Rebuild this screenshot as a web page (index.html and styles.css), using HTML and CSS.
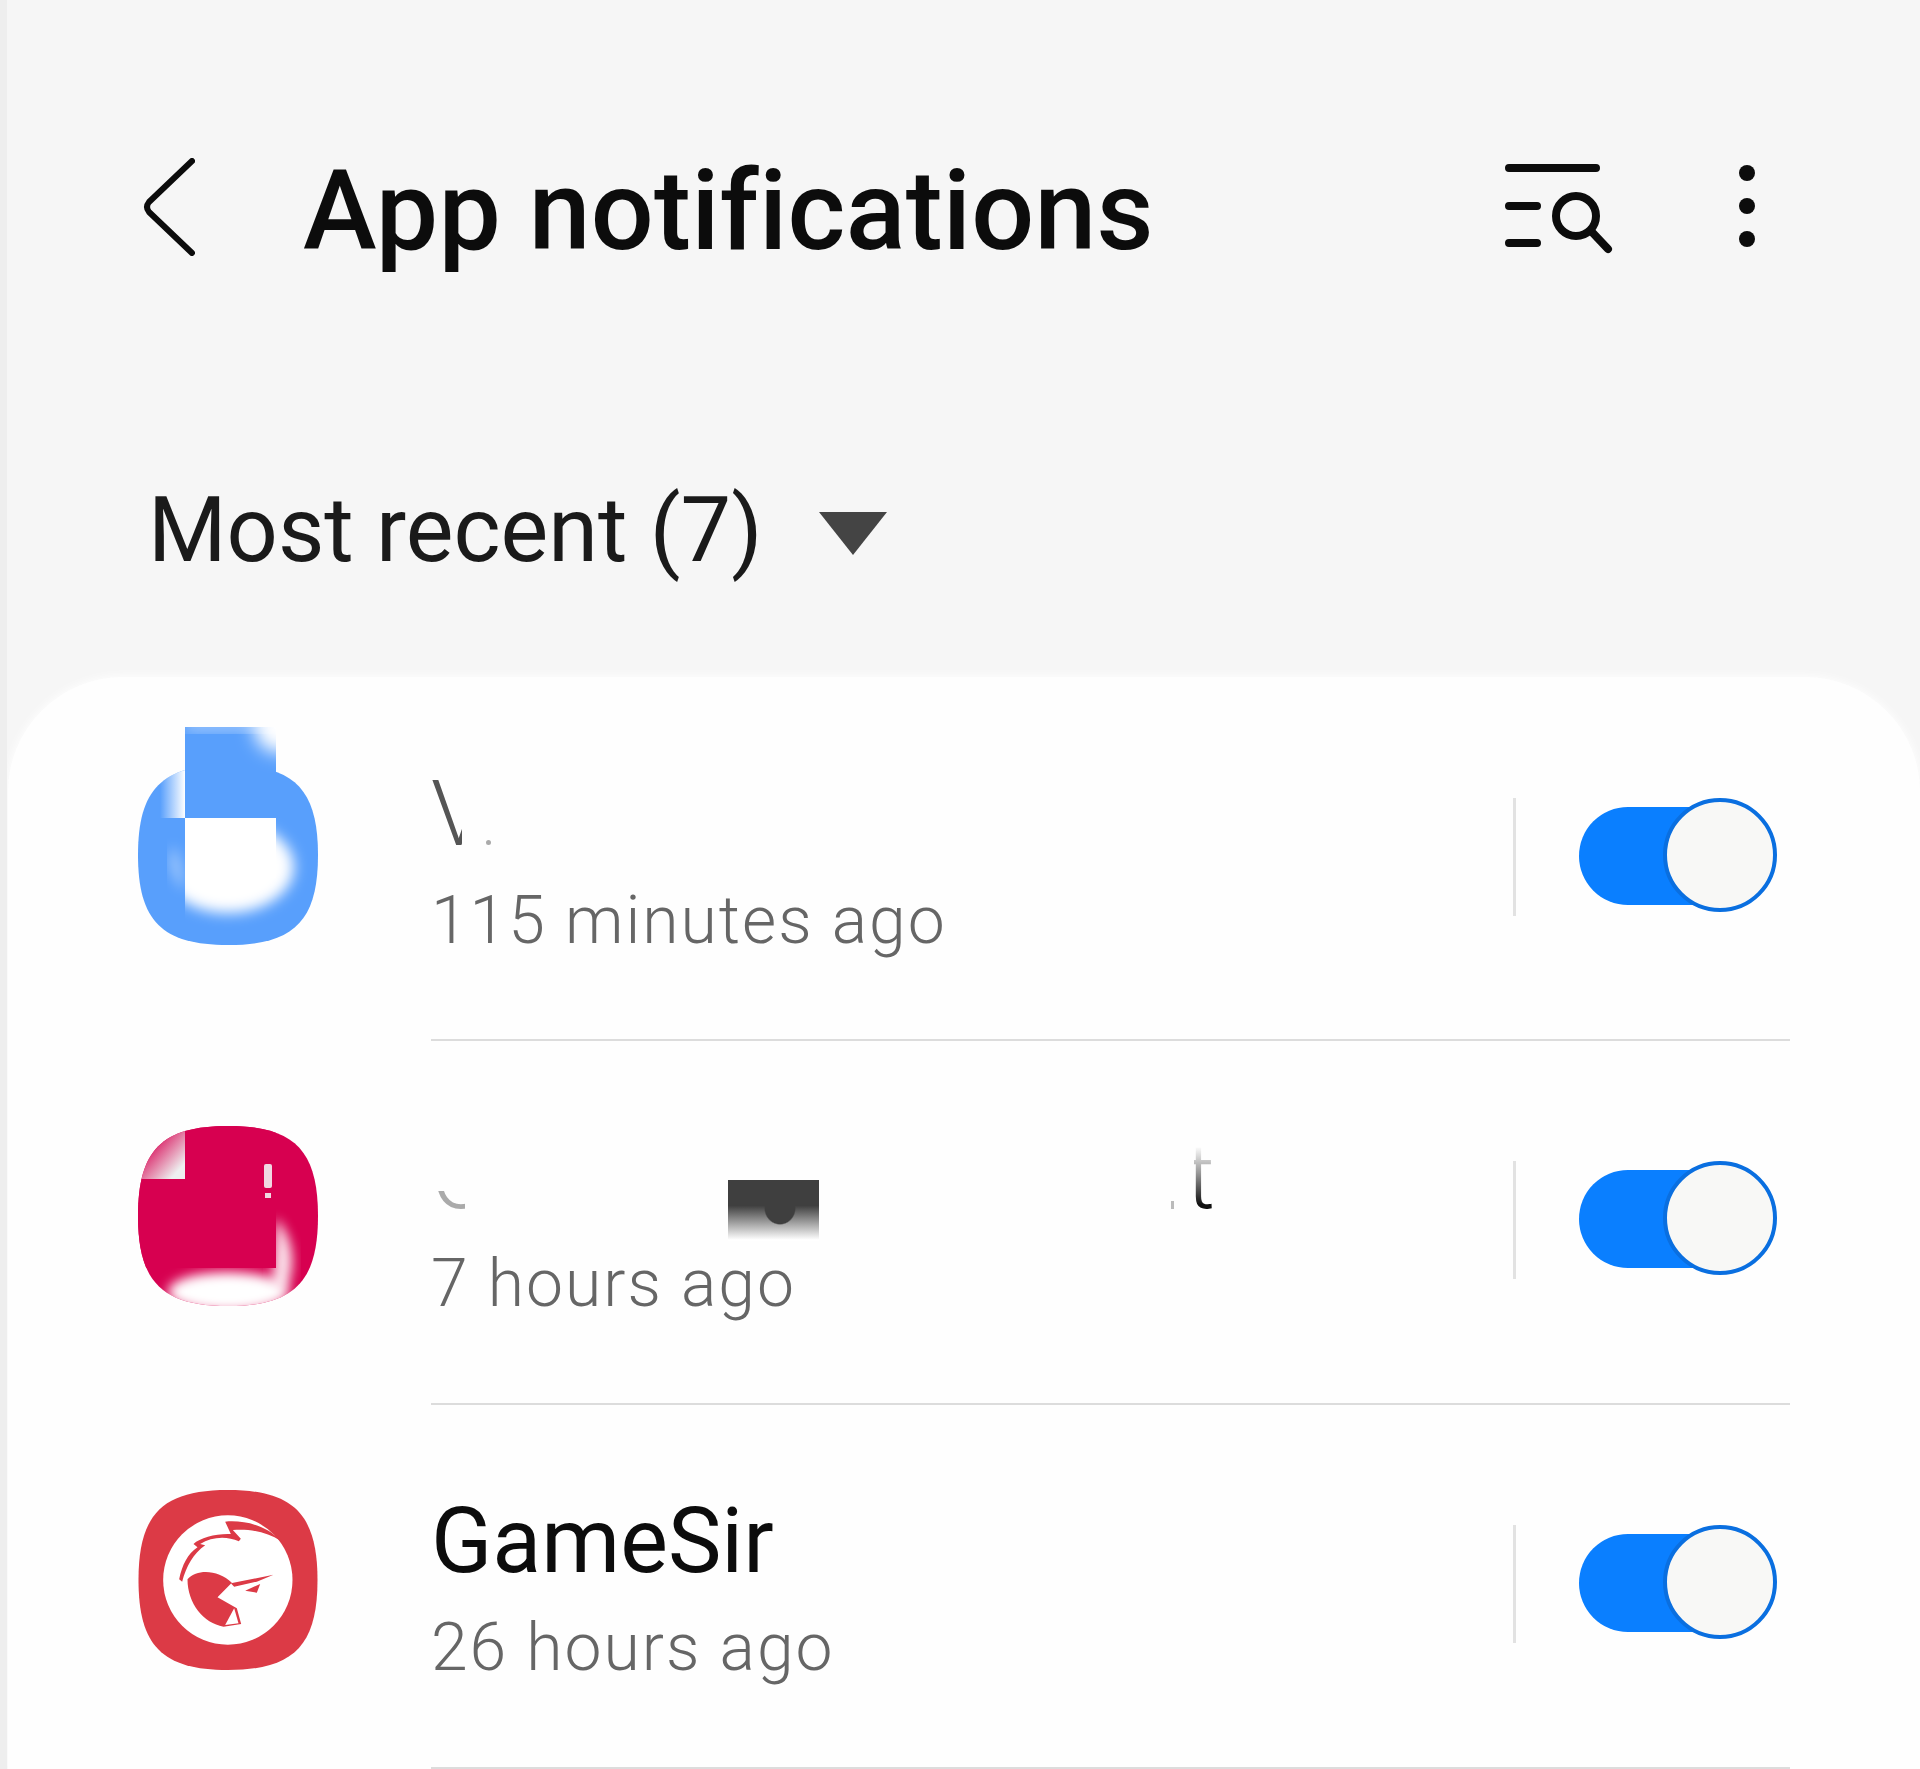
FILE: index.html
```html
<!DOCTYPE html>
<html lang="en">
<head>
  <meta charset="UTF-8" />
  <meta name="viewport" content="width=device-width, initial-scale=1" />
  <title>App notifications</title>
  <link rel="stylesheet" href="styles.css">
</head>
<body>
  <header class="app-bar">
    <svg class="back-icon" viewBox="0 0 52 98" aria-hidden="true">
      <path d="M49 3 6 44q-4 5 0 10l43 41" />
    </svg>
    <h1>App notifications</h1>
    <svg class="search-icon" viewBox="0 0 116 92" aria-hidden="true">
      <path d="M8 4h87M8 42h28M8 79h28M90 67l17 18" />
      <circle cx="75" cy="52" r="20" />
    </svg>
    <div class="more-icon"><span></span><span></span><span></span></div>
  </header>

  <div class="sort-row">
    <span>Most recent (7)</span>
    <div class="sort-arrow"></div>
  </div>

  <main class="card">
    <div class="row">
      <div class="icon icon-blue">
        <svg viewBox="0 0 180 218" aria-hidden="true">
          <defs>
            <clipPath id="blueBody">
              <path d="M90 38c66 0 90 24 90 90s-24 90-90 90-90-24-90-90 24-90 90-90z" />
            </clipPath>
            <clipPath id="blueTop">
              <rect x="47" y="0" width="91" height="91" />
            </clipPath>
            <clipPath id="blueInner">
              <rect x="47" y="91" width="133" height="127" />
            </clipPath>
            <linearGradient id="blueFadeLeft" x1="0" y1="0" x2="1" y2="0">
              <stop offset="0" stop-color="#fff" stop-opacity="0" />
              <stop offset="1" stop-color="#fff" />
            </linearGradient>
            <filter id="blueBlur" x="-30%" y="-30%" width="160%" height="160%">
              <feGaussianBlur stdDeviation="7" />
            </filter>
            <filter id="blueBlurBig" x="-60%" y="-60%" width="220%" height="220%">
              <feGaussianBlur stdDeviation="9" />
            </filter>
          </defs>
          <g clip-path="url(#blueBody)">
            <rect y="38" width="180" height="180" fill="#589ffc" />
            <rect x="22" y="38" width="25" height="53" fill="url(#blueFadeLeft)" />
            <g clip-path="url(#blueInner)">
              <ellipse cx="90" cy="140" rx="66" ry="46" fill="#fff" filter="url(#blueBlur)" />
            </g>
            <path d="M36 118q-8 22 11 46z" fill="#fff" opacity="0.75" filter="url(#blueBlur)" />
            <rect x="47" y="91" width="91" height="60" fill="#fff" />
          </g>
          <rect x="47" y="0" width="91" height="91" fill="#589ffc" />
          <g clip-path="url(#blueTop)">
            <circle cx="142" cy="0" r="26" fill="#fff" filter="url(#blueBlurBig)" />
            <rect x="47" y="-6" width="91" height="10" fill="#fff" opacity="0.5" filter="url(#blueBlur)" />
          </g>
        </svg>
      </div>
      <div class="row-text">
        <div class="row-title">
          <span class="clip-v">V</span><span class="clip-dot"></span>
        </div>
        <div class="row-sub">115 minutes ago</div>
      </div>
      <div class="toggle-wrap"><div class="toggle"><div class="thumb"></div></div></div>
    </div>

    <div class="row">
      <div class="icon icon-red">
        <svg viewBox="0 0 180 180" aria-hidden="true">
          <defs>
            <clipPath id="redBody">
              <path d="M90 0c66 0 90 24 90 90s-24 90-90 90-90-24-90-90S24 0 90 0z" />
            </clipPath>
            <linearGradient id="redCorner" x1="0" y1="0" x2="1" y2="1">
              <stop offset="0.25" stop-color="#d70050" />
              <stop offset="0.85" stop-color="#eef0f0" />
            </linearGradient>
            <filter id="redBlur" x="-40%" y="-40%" width="180%" height="180%">
              <feGaussianBlur stdDeviation="6" />
            </filter>
          </defs>
          <g clip-path="url(#redBody)">
            <rect width="180" height="180" fill="#d70050" />
            <ellipse cx="90" cy="166" rx="60" ry="20" fill="#fff" filter="url(#redBlur)" />
            <path d="M138 92c12 14 24 40 10 72l-14 0z" fill="#fff" opacity="0.9" filter="url(#redBlur)" />
            <rect x="0" y="53" width="138" height="89" fill="#d70050" />
            <rect x="47" y="0" width="91" height="53" fill="#d70050" />
            <rect x="0" y="0" width="47" height="53" fill="url(#redCorner)" />
            <rect x="126" y="38" width="8" height="24" rx="2" fill="#f0d8e2" />
            <rect x="127" y="67" width="6" height="5" fill="#f0d8e2" />
          </g>
        </svg>
      </div>
      <div class="row-text">
        <div class="row-title">
          <span class="clip-c">C</span><span class="block"></span><span class="tick"></span><span class="clip-t">t</span>
        </div>
        <div class="row-sub">7 hours ago</div>
      </div>
      <div class="toggle-wrap"><div class="toggle"><div class="thumb"></div></div></div>
    </div>

    <div class="row">
      <div class="icon">
        <svg viewBox="85 60 537 540" aria-hidden="true">
          <path d="M353 60c197 0 269 73 269 270s-72 270-269 270S85 527 85 330 156 60 353 60z" fill="#dc3a46" />
          <circle cx="353" cy="330" r="194" fill="#fff" />
          <path d="M232 328c30-33 93-28 133 10l-43 44 58 33 13 47-53 8c-60-10-108-70-108-142z" fill="#dc3a46" />
          <path d="M345 465l27-50 13 45z" fill="#fff" />
          <path d="M345 155c55-5 125 10 167 58-42-27-92-37-144-33l24 26-6 8c-36-16-81-14-116 8l15 4c-35 24-57 64-69 109l-9-7c9-43 25-76 55-96l-12-10c20-20 70-32 112-30z" fill="#dc3a46" />
          <path d="M362 340l128-26-50 21-68 15zM405 362l45-20-10 26z" fill="#dc3a46" />
        </svg>
      </div>
      <div class="row-text">
        <div class="row-title">GameSir</div>
        <div class="row-sub">26 hours ago</div>
      </div>
      <div class="toggle-wrap"><div class="toggle"><div class="thumb"></div></div></div>
    </div>
  </main>
</body>
</html>
```

FILE: styles.css
```css
html,
body {
  margin: 0;
}

body {
  height: 1769px;
  overflow: hidden;
  box-sizing: border-box;
  padding-left: 1px;
  border-left: 7px solid #eeeeee;
  background: #f6f6f6;
  color: #0c0c0c;
  font-family: Roboto, "Liberation Sans", sans-serif;
}

.app-bar {
  display: flex;
  align-items: flex-start;
  height: 380px;
  padding-top: 158px;
  box-sizing: border-box;
}

.back-icon {
  width: 52px;
  height: 98px;
  margin-left: 135px;
  flex: none;
}

.back-icon path {
  fill: none;
  stroke: #0c0c0c;
  stroke-width: 6;
  stroke-linecap: round;
  stroke-linejoin: round;
}

.app-bar h1 {
  margin: -12px 0 0 108px;
  font-size: 111px;
  font-weight: 500;
  line-height: 130px;
  letter-spacing: 0.2px;
  flex: 1;
}

.search-icon {
  width: 116px;
  height: 92px;
  margin-top: 6px;
  flex: none;
}

.search-icon path,
.search-icon circle {
  fill: none;
  stroke: #0c0c0c;
  stroke-width: 8;
  stroke-linecap: round;
}

.more-icon {
  display: flex;
  flex-direction: column;
  gap: 17px;
  margin: 7px 165px 0 122px;
}

.more-icon span {
  width: 16px;
  height: 16px;
  border-radius: 50%;
  background: #0c0c0c;
}

.sort-row {
  display: flex;
  align-items: center;
  height: 240px;
  margin-top: 30px;
  padding-left: 140px;
  font-size: 90px;
  color: #1a1a1a;
}

.sort-arrow {
  width: 0;
  height: 0;
  margin: 7px 0 0 56px;
  border-left: 34px solid transparent;
  border-right: 34px solid transparent;
  border-top: 43px solid #444;
}

.card {
  height: 1092px;
  margin-top: 27px;
  background: #fefefe;
  border-radius: 115px 115px 0 0;
  box-shadow: 0 0 10px 1px rgba(255, 255, 255, 0.9);
}

.row {
  position: relative;
  display: flex;
  align-items: center;
  height: 364px;
  box-sizing: border-box;
  padding-left: 130px;
}

.row:first-child {
  height: 362px;
}

.row::after {
  content: "";
  position: absolute;
  left: 423px;
  right: 130px;
  bottom: -2px;
  height: 2px;
  background: #dcdcdc;
}

.icon {
  width: 180px;
  height: 180px;
  margin-top: -10px;
  flex: none;
}

.icon svg {
  display: block;
  width: 180px;
  height: 180px;
}

.icon-blue {
  margin-top: -6px;
}

.icon-blue svg {
  height: 218px;
  margin-top: -38px;
}

.row-text {
  flex: 1;
  margin: 5px 0 0 113px;
}

.row-title {
  display: flex;
  align-items: flex-start;
  height: 121px;
  font-size: 90px;
  line-height: 106px;
  color: #0c0c0c;
}

.row-sub {
  font-size: 66px;
  font-weight: 300;
  line-height: 76px;
  letter-spacing: 2px;
  color: #666;
}

/* what is left of the two blurred-out app names */
.clip-v {
  width: 34px;
  color: #555;
  font-weight: 300;
  clip-path: inset(0 3px 0 0);
}

.clip-dot {
  width: 5px;
  height: 5px;
  margin: 78px 0 0 21px;
  border-radius: 50%;
  background: #aaa;
}

.clip-c {
  width: 58px;
  color: #aaa;
  font-weight: 300;
  clip-path: inset(66px 24px 18px 0);
}

.block {
  width: 91px;
  height: 61px;
  margin: 55px 0 0 239px;
  background:
    radial-gradient(ellipse 16px 17px at 52px 28px, #3f3f3f 92%, transparent),
    linear-gradient(#3f3f3f 42%, #fff 98%);
}

.tick {
  width: 3px;
  height: 8px;
  margin: 76px 0 0 352px;
  background: #bbb;
}

.clip-t {
  margin-left: 12px;
  font-weight: 300;
  background: linear-gradient(#fff 20%, #999 45%, #111 75%);
  -webkit-background-clip: text;
  background-clip: text;
  color: transparent;
  clip-path: inset(0 0 0 8px);
}

.toggle-wrap {
  display: flex;
  align-items: center;
  width: 407px;
  height: 118px;
  margin-top: -2px;
  box-sizing: border-box;
  padding-left: 63px;
  border-left: 3px solid #e2e2e2;
}

.toggle {
  position: relative;
  width: 190px;
  height: 98px;
  margin-top: -2px;
  border-radius: 49px;
  background: #0a7fff;
}

.thumb {
  position: absolute;
  top: -9px;
  left: 84px;
  width: 106px;
  height: 106px;
  border: 4px solid #0a6fe0;
  border-radius: 50%;
  background: #f8f8f6;
}
```
